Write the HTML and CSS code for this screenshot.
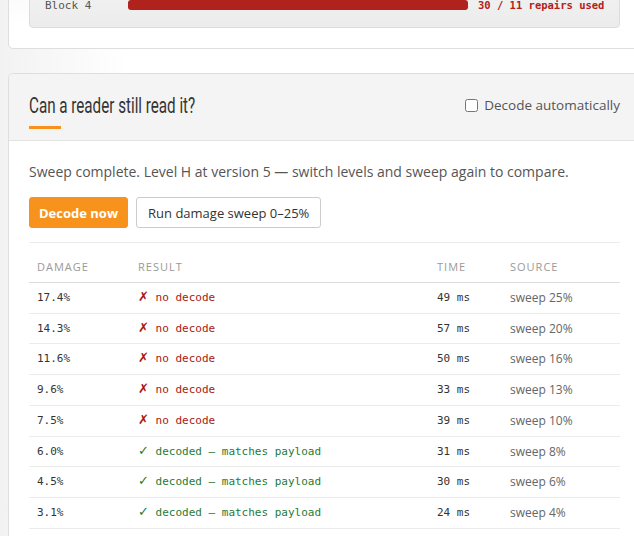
FILE: index.html
```html
<!DOCTYPE html>
<html lang="en">
<head>
<meta charset="UTF-8">
<meta name="viewport" content="width=device-width, initial-scale=1.0">
<title>QR damage sweep</title>
<link rel="stylesheet" href="styles.css">
</head>
<body>
<div class="card card-blocks">
    <div class="blocks">
        <div class="block-row">
            <span class="block-name">Block 3</span>
            <div class="block-bar"><div class="block-fill" style="width: 100%;"></div></div>
            <span class="block-note">28 / 11 repairs used</span>
        </div>
        <div class="block-row">
            <span class="block-name">Block 4</span>
            <div class="block-bar"><div class="block-fill" style="width: 100%;"></div></div>
            <span class="block-note">30 / 11 repairs used</span>
        </div>
    </div>
</div>

<div class="card">
    <div class="card-head">
        <div>
            <h2>Can a reader still read it?</h2>
            <div class="accent"></div>
        </div>
        <label class="auto">
            <input type="checkbox" id="autoDecode">
            Decode automatically
        </label>
    </div>
    <div class="card-body">
        <p class="status">Sweep complete. Level H at version 5 — switch levels and sweep again to compare.</p>
        <div class="actions">
            <button class="btn btn-primary">Decode now</button>
            <button class="btn">Run damage sweep 0–25%</button>
        </div>
        <table class="results">
            <thead>
                <tr>
                    <th class="col-damage">Damage</th>
                    <th class="col-result">Result</th>
                    <th class="col-time">Time</th>
                    <th>Source</th>
                </tr>
            </thead>
            <tbody>
                <tr><td class="mono">17.4%</td><td class="mono fail"><span class="mark">✗</span> no decode</td><td class="mono">49 ms</td><td class="src">sweep 25%</td></tr>
                <tr><td class="mono">14.3%</td><td class="mono fail"><span class="mark">✗</span> no decode</td><td class="mono">57 ms</td><td class="src">sweep 20%</td></tr>
                <tr><td class="mono">11.6%</td><td class="mono fail"><span class="mark">✗</span> no decode</td><td class="mono">50 ms</td><td class="src">sweep 16%</td></tr>
                <tr><td class="mono">9.6%</td><td class="mono fail"><span class="mark">✗</span> no decode</td><td class="mono">33 ms</td><td class="src">sweep 13%</td></tr>
                <tr><td class="mono">7.5%</td><td class="mono fail"><span class="mark">✗</span> no decode</td><td class="mono">39 ms</td><td class="src">sweep 10%</td></tr>
                <tr><td class="mono">6.0%</td><td class="mono ok"><span class="mark">✓</span> decoded — matches payload</td><td class="mono">31 ms</td><td class="src">sweep 8%</td></tr>
                <tr><td class="mono">4.5%</td><td class="mono ok"><span class="mark">✓</span> decoded — matches payload</td><td class="mono">30 ms</td><td class="src">sweep 6%</td></tr>
                <tr><td class="mono">3.1%</td><td class="mono ok"><span class="mark">✓</span> decoded — matches payload</td><td class="mono">24 ms</td><td class="src">sweep 4%</td></tr>
            </tbody>
        </table>
    </div>
</div>
</body>
</html>
```

FILE: styles.css
```css
html, body {
    overflow-x: hidden;
}
body {
    margin: 0;
    padding: 0 8px 40px;
    font-family: "Open Sans", sans-serif;
    color: #555;
    background: linear-gradient(to right, #f2f2f2, #fff 20%);
}
.card {
    width: 633px;
    box-sizing: border-box;
    background: #fff;
    border: 1px solid #dedede;
    border-radius: 5px;
    margin-top: 24px;
}
.card-blocks {
    margin-top: -53px;
    padding: 20px;
    background: linear-gradient(to bottom right, #f3f3f3, #fff 40%);
}
.blocks {
    background: linear-gradient(to bottom, #f4f4f4, #ececec);
    border: 1px solid #dcdcdc;
    border-radius: 4px;
    padding: 6px 15px 12px;
}
.block-row {
    display: flex;
    align-items: center;
    height: 20px;
    font-family: "DejaVu Sans Mono", monospace;
    font-size: 11px;
    white-space: nowrap;
}
.block-name {
    width: 83px;
    flex-shrink: 0;
    color: #555;
}
.block-bar {
    width: 340px;
    flex-shrink: 0;
    height: 10px;
    border-radius: 3px;
    background: #e0e0e0;
    overflow: hidden;
}
.block-fill {
    height: 100%;
    background: #b0221b;
}
.block-note {
    margin-left: 10px;
    font-size: 10.5px;
    color: #b0221b;
    font-weight: bold;
}
.card-head {
    display: flex;
    justify-content: space-between;
    align-items: flex-start;
    padding: 18px 20px 11px 20px;
    background: #f4f4f4;
    border-bottom: 1px solid #e2e2e2;
    border-radius: 5px 5px 0 0;
}
h2 {
    display: inline-block;
    margin: 0;
    font-family: Roboto, sans-serif;
    font-weight: normal;
    font-size: 22px;
    line-height: 28px;
    color: #333;
    transform: scaleX(0.69);
    transform-origin: left center;
    white-space: nowrap;
}
.accent {
    width: 32px;
    height: 3px;
    margin-top: 6px;
    background: #f7921d;
}
.auto {
    display: flex;
    align-items: center;
    gap: 6px;
    margin-top: 4px;
    font-size: 13.5px;
    color: #555;
}
.auto input {
    margin: 0;
    width: 13px;
    height: 13px;
}
.card-body {
    padding: 20px;
}
.status {
    margin: 0 0 14px;
    font-size: 14px;
    line-height: 22px;
}
.actions {
    display: flex;
    gap: 8px;
    margin-bottom: 14px;
}
.btn {
    font-family: "Open Sans", sans-serif;
    font-size: 13px;
    padding: 0 11px;
    height: 31px;
    border: 1px solid #ccc;
    border-radius: 3px;
    background: #fff;
    color: #333;
    cursor: pointer;
}
.btn-primary {
    padding: 0 9px;
    background: #f7921d;
    border-color: #f7921d;
    color: #fff;
    font-weight: bold;
}
.results {
    width: 591px;
    border-collapse: collapse;
    border-top: 1px solid #ececec;
}
.results th {
    text-align: left;
    font-weight: normal;
    font-size: 11px;
    letter-spacing: 1px;
    text-transform: uppercase;
    color: #999;
    padding: 16px 8px 8px;
    border-bottom: 1px solid #dcdcdc;
}
.col-damage { width: 85px; }
.col-result { width: 283px; }
.col-time { width: 57px; }
.results td {
    padding: 8px 8px;
    line-height: 13.7px;
    border-bottom: 1px solid #ececec;
    color: #333;
}
.mono {
    font-family: "DejaVu Sans Mono", monospace;
    font-size: 11px;
}
.mark {
    font-family: "DejaVu Sans", sans-serif;
    font-size: 13px;
    line-height: 10px;
}
.fail {
    color: #a8170f !important;
}
.ok {
    color: #1f7a36 !important;
}
.src {
    font-size: 12px;
    color: #666 !important;
}
```
